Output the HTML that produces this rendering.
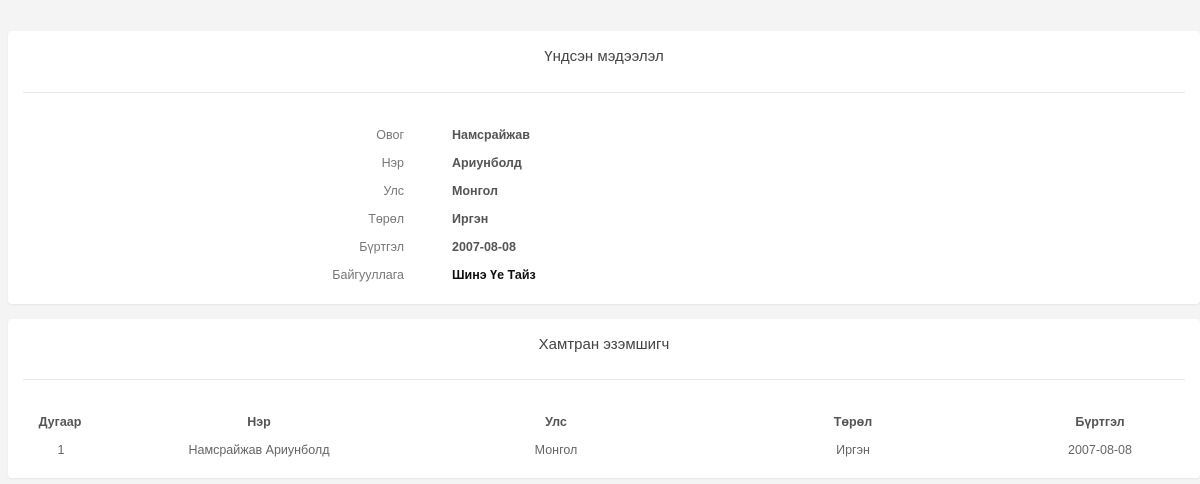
<!DOCTYPE html><html><head><style>
body{margin:0;width:1200px;height:484px;background:#f4f4f4;font-family:"Liberation Sans",sans-serif;color:#555;overflow:hidden;position:relative}
.card{position:absolute;left:8px;right:0;background:#fff;border-radius:4px;box-shadow:0 1px 2px rgba(0,0,0,.06)}
.t{position:absolute;left:0;right:0;text-align:center;font-size:15px;color:#444}
.hr{position:absolute;left:15px;right:15px;height:1px;background:#e6e6e6}
.row{position:absolute;font-size:12.5px;line-height:16px}
.l{position:absolute;right:796px;width:200px;text-align:right;color:#777}
.v{position:absolute;left:444px;font-weight:bold;color:#555}
.c{position:absolute;font-size:12.5px;transform:translateX(-50%);white-space:nowrap}
</style></head><body>
<div class="card" style="top:31px;height:273px">
<div class="t" style="top:17px">Үндсэн мэдээлэл</div>
<div class="hr" style="top:61px"></div>
<div class="row" style="top:96px;left:0;right:0"><span class="l">Овог</span><span class="v">Намсрайжав</span></div>
<div class="row" style="top:124px;left:0;right:0"><span class="l">Нэр</span><span class="v">Ариунболд</span></div>
<div class="row" style="top:152px;left:0;right:0"><span class="l">Улс</span><span class="v">Монгол</span></div>
<div class="row" style="top:180px;left:0;right:0"><span class="l">Төрөл</span><span class="v">Иргэн</span></div>
<div class="row" style="top:208px;left:0;right:0"><span class="l">Бүртгэл</span><span class="v">2007-08-08</span></div>
<div class="row" style="top:236px;left:0;right:0"><span class="l">Байгууллага</span><span class="v" style="color:#111">Шинэ Үе Тайз</span></div>
</div>
<div class="card" style="top:319px;height:159px">
<div class="t" style="top:17px">Хамтран эзэмшигч</div>
<div class="hr" style="top:60px"></div>
<div style="position:absolute;top:96px;left:0;font-weight:bold;color:#555">
<span class="c" style="left:52px">Дугаар</span><span class="c" style="left:251px">Нэр</span><span class="c" style="left:548px">Улс</span><span class="c" style="left:845px">Төрөл</span><span class="c" style="left:1092px">Бүртгэл</span></div>
<div style="position:absolute;top:124px;left:0;color:#666">
<span class="c" style="left:53px">1</span><span class="c" style="left:251px">Намсрайжав Ариунболд</span><span class="c" style="left:548px">Монгол</span><span class="c" style="left:845px">Иргэн</span><span class="c" style="left:1092px">2007-08-08</span></div>
</div>
</body></html>
